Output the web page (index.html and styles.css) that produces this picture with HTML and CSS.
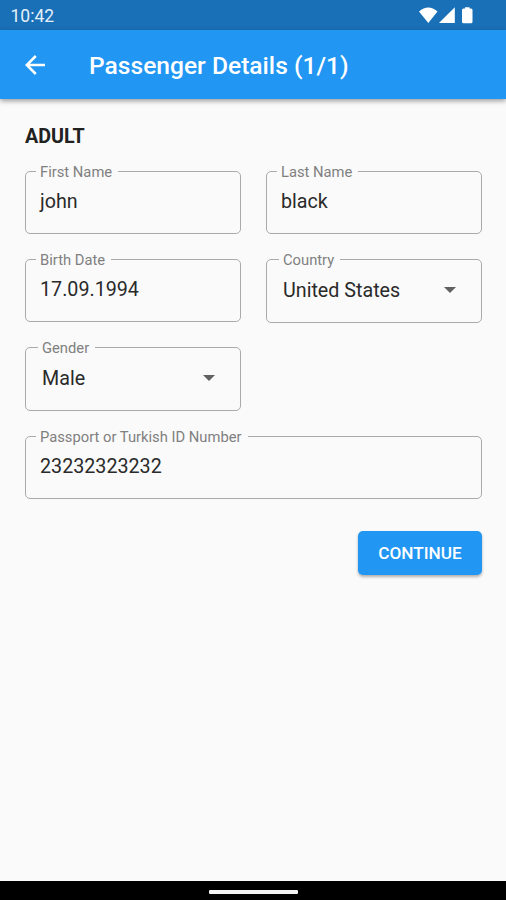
FILE: index.html
```html
<!DOCTYPE html>
<html lang="en">
<head>
<meta charset="utf-8">
<title>Passenger Details</title>
<link rel="stylesheet" href="styles.css">
</head>
<body>
<div class="status">
  <span class="time">10:42</span>
  <svg class="status-icons" width="56" height="18" viewBox="0 0 56 18" fill="#fff">
    <path d="M0 4.500Q9.300 -3.500 18.500 4.500L9.300 16Z"/>
    <path d="M20 16L35.800 0.300V16Z"/>
    <path d="M46 0.300h4.500v1.200h1.500q1.500 0 1.500 1.500v11.700q0 1.500-1.500 1.500h-7.500q-1.500 0-1.500-1.500v-11.700q0-1.500 1.500-1.500h1.500z"/>
  </svg>
</div>
<header class="appbar">
  <svg class="back" width="20" height="20" viewBox="0 0 20 20" fill="none" stroke="#fff" stroke-width="2.500"><path d="M20 10H2.200M10.800 1L1.800 10l9 9"/></svg>
  <h1 class="title">Passenger Details (1/1)</h1>
</header>
<main class="content">
  <h2 class="section">ADULT</h2>
  <form class="form">
    <fieldset class="field"><legend>First Name</legend><div class="value">john</div></fieldset>
    <fieldset class="field"><legend>Last Name</legend><div class="value">black</div></fieldset>
    <fieldset class="field"><legend>Birth Date</legend><div class="value">17.09.1994</div></fieldset>
    <fieldset class="field select"><legend>Country</legend><div class="value">United States<svg class="caret" width="12" height="6" viewBox="0 0 12 6"><path d="M0 0h12L6 6z"/></svg></div></fieldset>
    <fieldset class="field select"><legend>Gender</legend><div class="value">Male<svg class="caret" width="12" height="6" viewBox="0 0 12 6"><path d="M0 0h12L6 6z"/></svg></div></fieldset>
    <fieldset class="field wide"><legend>Passport or Turkish ID Number</legend><div class="value">23232323232</div></fieldset>
  </form>
  <button class="continue" type="button">CONTINUE</button>
</main>
<footer class="navbar"><div class="handle"></div></footer>
</body>
</html>
```
FILE: styles.css
```css
* { box-sizing: border-box; }
body {
  margin: 0;
  width: 506px;
  height: 900px;
  display: flex;
  flex-direction: column;
  overflow: hidden;
  background: #fafafa;
  font-family: Roboto, "Liberation Sans", sans-serif;
  color: #2a2a2a;
}
.status {
  height: 30px;
  flex: none;
  display: flex;
  align-items: center;
  justify-content: space-between;
  padding: 2px 31px 0 10.500px;
  background: #1a70b7;
  color: #e4effa;
}
.time { font-size: 17.500px; line-height: 20px; }
.status-icons { display: block; }
.appbar {
  height: 69px;
  flex: none;
  display: flex;
  align-items: center;
  padding-left: 25px;
  background: #2196f3;
  box-shadow: 0 2px 5px rgba(0, 0, 0, .38);
}
.title {
  margin: 3px 0 0 44px;
  font-size: 24.600px;
  line-height: 30px;
  font-weight: 500;
  color: #fff;
}
.content {
  flex: 1;
  display: flex;
  flex-direction: column;
  padding: 26px 24px 0 25px;
}
.section {
  margin: 0;
  font-size: 19.700px;
  line-height: 24px;
  font-weight: 700;
  color: #212121;
}
.form {
  display: grid;
  grid-template-columns: 216px 216px;
  grid-template-rows: 88px 88px 89px 71px;
  column-gap: 25px;
  align-items: start;
  margin-top: 14px;
}
.field {
  min-width: 0;
  height: 71px;
  margin: 0;
  padding: 0 14px;
  border: 1px solid #aaa;
  border-radius: 5px;
}
.field legend {
  margin-left: -4px;
  padding: 0 6px 0 4px;
  height: 16px;
  font-size: 14.750px;
  line-height: 19px;
  color: #808080;
  white-space: nowrap;
}
.value {
  display: flex;
  align-items: center;
  justify-content: space-between;
  margin-top: 10px;
  font-size: 19.700px;
  line-height: 25px;
}
.select { height: 72px; padding: 0 25px 0 16px; }
.select .value { margin-top: 11px; }
.wide { grid-column: 1 / -1; }
.caret { display: block; margin-bottom: 2px; fill: #616161; }
.continue {
  align-self: flex-end;
  width: 124px;
  height: 44px;
  margin-top: 32px;
  padding: 0;
  border: 0;
  border-radius: 5px;
  background: #2196f3;
  box-shadow: 0 2px 3px rgba(0, 0, 0, .3);
  font: 500 17.200px/44px Roboto, "Liberation Sans", sans-serif;
  color: #fff;
}
.navbar {
  height: 19px;
  flex: none;
  display: flex;
  justify-content: center;
  padding-top: 9px;
  background: #000;
}
.handle { width: 89px; height: 4px; border-radius: 1px; background: #f4f4f4; }
```
